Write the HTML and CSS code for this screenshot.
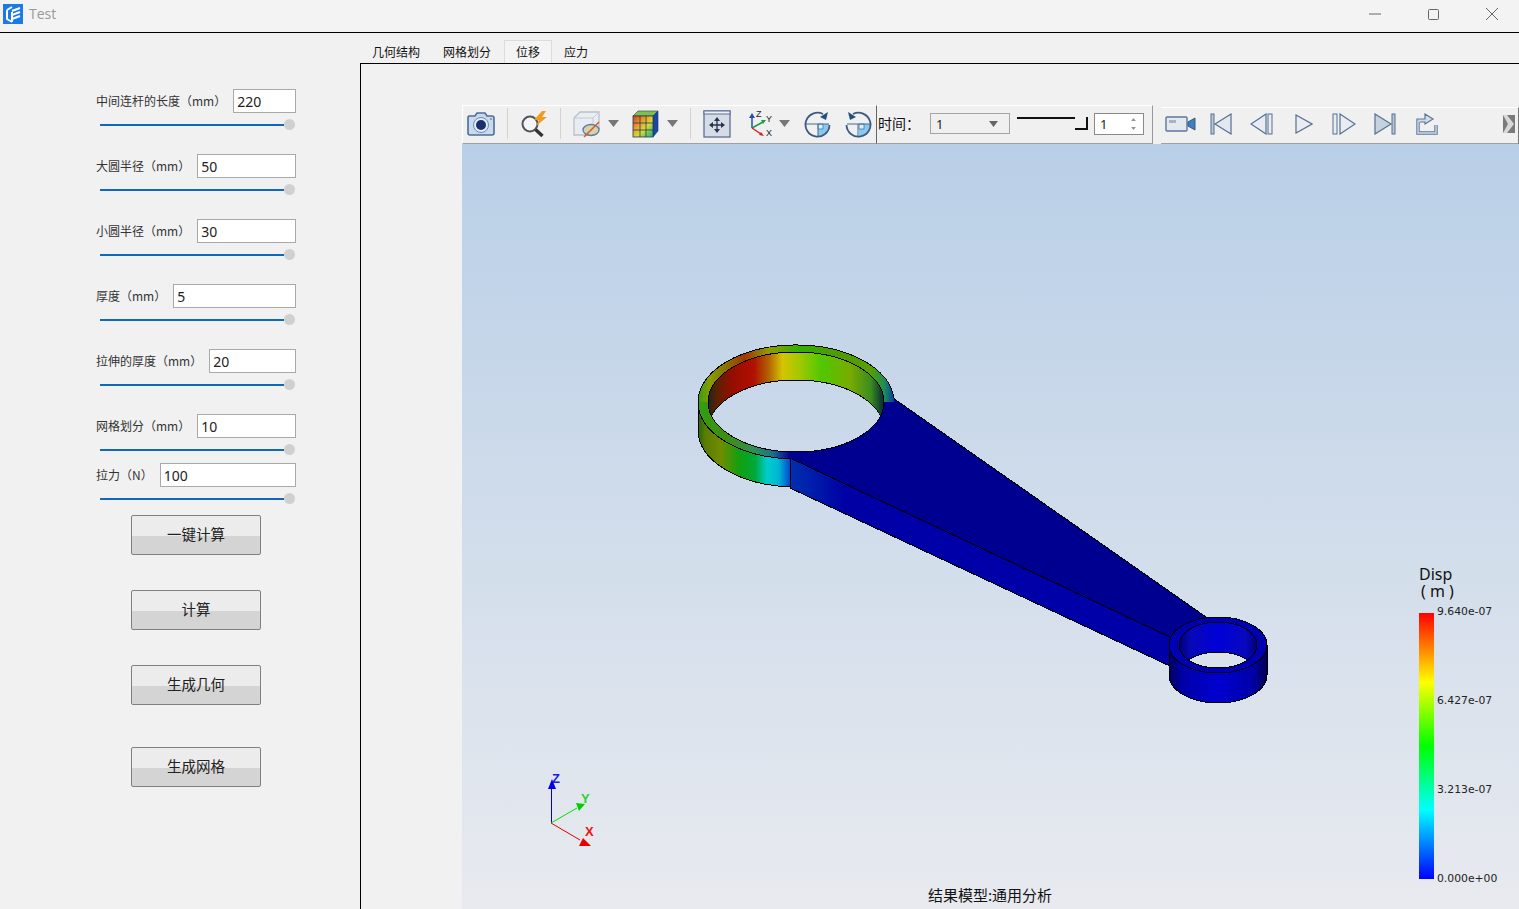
FILE: index.html
```html
<!DOCTYPE html>
<html lang="zh-CN">
<head>
    <meta charset="UTF-8">
    <meta name="viewport" content="width=device-width, initial-scale=1.0">
    <title>Test</title>
    <link rel="stylesheet" href="styles.css">
</head>
<body>
    <div id="wrap">
        <!-- 标题栏 -->
        <div id="titlebar">
            <svg class="appicon" width="20" height="20" viewBox="0 0 20 20">
                <rect width="20" height="20" fill="#1a7be8"/>
                <path d="M4 6l5-3M4 6v9l5 3M9 8v10M9 7l8-3M9 11l8-3M9 15l8-3" fill="none" stroke="#fff" stroke-width="2"/>
            </svg>
            <span class="apptitle">Test</span>
            <div class="winbtns">
                <svg width="14" height="14" viewBox="0 0 14 14"><path d="M1 7h12" stroke="#666" fill="none"/></svg>
                <svg width="14" height="14" viewBox="0 0 14 14"><rect x="2.5" y="2.5" width="10" height="10" rx="1" stroke="#666" fill="none"/></svg>
                <svg width="14" height="14" viewBox="0 0 14 14"><path d="M1 1l12 12M13 1L1 13" stroke="#666" fill="none"/></svg>
            </div>
        </div>

        <div id="main">
            <!-- 左侧参数 -->
            <div id="params">
                <div class="field"><label>中间连杆的长度（mm）</label><input class="num" type="text" value="220"></div>
                <div class="slider"><i></i><b></b></div>
                <div class="field"><label>大圆半径（mm）</label><input class="num" type="text" value="50"></div>
                <div class="slider"><i></i><b></b></div>
                <div class="field"><label>小圆半径（mm）</label><input class="num" type="text" value="30"></div>
                <div class="slider"><i></i><b></b></div>
                <div class="field"><label>厚度（mm）</label><input class="num" type="text" value="5"></div>
                <div class="slider"><i></i><b></b></div>
                <div class="field"><label>拉伸的厚度（mm）</label><input class="num" type="text" value="20"></div>
                <div class="slider"><i></i><b></b></div>
                <div class="field"><label>网格划分（mm）</label><input class="num" type="text" value="10"></div>
                <div class="slider tight"><i></i><b></b></div>
                <div class="field"><label>拉力（N）</label><input class="num" type="text" value="100"></div>
                <div class="slider tight"><i></i><b></b></div>
                <button class="calc first">一键计算</button>
                <button class="calc">计算</button>
                <button class="calc">生成几何</button>
                <button class="calc last">生成网格</button>
            </div>

            <!-- 右侧 -->
            <div id="right">
                <div id="tabs">
                    <div class="tab">几何结构</div>
                    <div class="tab">网格划分</div>
                    <div class="tab on">位移</div>
                    <div class="tab">应力</div>
                </div>
                <div id="pane">
                    <div id="toolbar">
                        <div class="tb tb-left">
                            <svg class="m4" width="28" height="26" viewBox="0 0 28 26">
                                <path d="M2 5h6l2-3h8l2 3h5a2 2 0 0 1 2 2v15a2 2 0 0 1-2 2H3a2 2 0 0 1-2-2V7a2 2 0 0 1 1-2z" fill="#c9daf0" stroke="#4d6d96" stroke-width="1.6"/>
                                <circle cx="14" cy="14" r="7.5" fill="#e4ecf6" stroke="#6d8bb3"/>
                                <circle cx="14" cy="14" r="5" fill="#1b2f70"/>
                                <circle cx="24" cy="8" r="1" fill="#6d8bb3"/>
                            </svg>
                            <span class="sep m12"></span>
                            <svg class="m12" width="28" height="26" viewBox="0 0 28 26">
                                <circle cx="10" cy="13" r="7.5" fill="#f2f5fa" stroke="#555" stroke-width="2"/>
                                <path d="M15.5 18.5l7 6.5" stroke="#333" stroke-width="3.4" fill="none"/>
                                <path d="M22 0l-8 9h5l-3 6 11-9h-5l4-6z" fill="#f09a1e"/>
                            </svg>
                            <span class="sep m12"></span>
                            <svg class="m12" width="28" height="28" viewBox="0 0 28 28">
                                <path d="M1 8l6-6h19v17l-6 6H1z" fill="#e9edf3" stroke="#b8c0cc" stroke-width="1.3"/>
                                <path d="M1 8h19v17M20 8l6-6" fill="none" stroke="#c2cad6"/>
                                <ellipse cx="18" cy="20" rx="8" ry="5.5" fill="#d8d2a8" stroke="#5a7ba6" stroke-width="1.3"/>
                                <path d="M11 27L26 12" stroke="#d0582a" stroke-width="1.4"/>
                            </svg>
                            <svg class="m7" width="11" height="7" viewBox="0 0 11 7"><path d="M0 0h11L5.5 7z" fill="#777"/></svg>
                            <svg class="m13" width="27" height="28" viewBox="0 0 27 28">
                                <defs>
                                    <linearGradient id="cubefront" x1="0" y1="0" x2="1" y2="1">
                                        <stop offset="0" stop-color="#d83a20"/><stop offset=".35" stop-color="#e8a030"/><stop offset=".6" stop-color="#d8d840"/><stop offset=".85" stop-color="#50c060"/><stop offset="1" stop-color="#30a0d0"/>
                                    </linearGradient>
                                </defs>
                                <path d="M1 6l5-5h20l-5 5z" fill="#7cc24a" stroke="#2a3a4a" stroke-width=".6"/>
                                <path d="M21 6l5-5v20l-5 6z" fill="#1848a8" stroke="#12306a" stroke-width=".6"/>
                                <rect x="1" y="6" width="20" height="21" fill="url(#cubefront)" stroke="#2a3a4a" stroke-width=".8"/>
                                <path d="M8 6v21M14 6v21M1 13h20M1 20h20" stroke="#2a3a4a" stroke-width=".8"/>
                            </svg>
                            <svg class="m8" width="11" height="7" viewBox="0 0 11 7"><path d="M0 0h11L5.5 7z" fill="#777"/></svg>
                            <span class="sep m12"></span>
                            <svg class="m12" width="28" height="28" viewBox="0 0 28 28">
                                <rect x="1" y="1" width="26" height="26" fill="#d5dce6" stroke="#5b7194" stroke-width="1.3"/>
                                <rect x="1" y="1" width="26" height="3" fill="#eef1f6" stroke="#5b7194"/>
                                <path d="M14 10v10M9 15h10" stroke="#25344f" stroke-width="1.3"/>
                                <path d="M14 7l-3 4h6zM14 23l-3-4h6zM6 15l4-3v6zM22 15l-4-3v6z" fill="#25344f"/>
                            </svg>
                            <svg class="m16" width="26" height="28" viewBox="0 0 26 28">
                                <path d="M5 18V7" stroke="#1f4fb8" stroke-width="1.5"/>
                                <path d="M5 3l-3 5h6z" fill="#1f4fb8"/>
                                <path d="M5 18l11-6" stroke="#1e9a48" stroke-width="1.5"/>
                                <path d="M19 10l-5 0 2 4z" fill="#1e9a48"/>
                                <path d="M5 18l9 6" stroke="#d8202a" stroke-width="1.5"/>
                                <path d="M17 26l-5-1 2-3z" fill="#d8202a"/>
                                <text x="9" y="7" class="axislabel">Z</text>
                                <text x="19" y="12" class="axislabel">Y</text>
                                <text x="19" y="26" class="axislabel">X</text>
                            </svg>
                            <svg class="m6" width="11" height="7" viewBox="0 0 11 7"><path d="M0 0h11L5.5 7z" fill="#777"/></svg>
                            <svg class="m14" width="27" height="28" viewBox="0 0 27 28">
                                <path d="M14 14h11a12 12 0 0 1-11 12z" fill="#8cc8ee"/>
                                <path d="M14 14h5v5h-5z" fill="#d9eefa" stroke="#2c6ea8" stroke-width=".7"/>
                                <path d="M1 14h24M14 14v12" stroke="#3c6a96" fill="none"/>
                                <path d="M19 4A12 12 0 1 0 25.5 15" fill="none" stroke="#3c5a80" stroke-width="1.8"/>
                                <path d="M24 2l-2 8-6-3z" fill="#24507e"/>
                            </svg>
                            <svg class="m14" width="27" height="28" viewBox="0 0 27 28">
                                <path d="M13 14H2a12 12 0 0 0 11 12z" fill="#8cc8ee" transform="translate(27 0) scale(-1 1)"/>
                                <path d="M8 14h5v5H8z" fill="#d9eefa" stroke="#2c6ea8" stroke-width=".7" transform="translate(27 0) scale(-1 1)"/>
                                <path d="M26 14H2M13 14v12" stroke="#3c6a96" fill="none"/>
                                <path d="M8 4A12 12 0 1 1 1.5 15" fill="none" stroke="#3c5a80" stroke-width="1.8"/>
                                <path d="M3 2l2 8 6-3z" fill="#24507e"/>
                            </svg>
                        </div>

                        <div class="tb tb-time">
                            <span class="timelabel">时间：</span>
                            <div class="combo"><span>1</span><svg width="9" height="6" viewBox="0 0 9 6"><path d="M0 0h9L4.5 6z" fill="#666"/></svg></div>
                            <div class="timeslider"><i></i><b></b></div>
                            <div class="spin"><span>1</span><svg width="7" height="16" viewBox="0 0 7 16"><path d="M3.5 2L6 5H1zM3.5 14L1 11h5z" fill="#999"/></svg></div>
                        </div>

                        <div class="tb tb-play">
                            <svg class="m4" width="31" height="16" viewBox="0 0 31 16">
                                <rect x="1" y="1" width="21" height="14" rx="1" fill="#e4e9f0" stroke="#5c7698" stroke-width="1.4"/>
                                <rect x="4" y="4" width="7" height="3" fill="#a6b3c4"/>
                                <path d="M23 6l7-4v12l-7-4z" fill="#3d80c0" stroke="#345a86"/>
                            </svg>
                            <svg class="m14" width="22" height="22" viewBox="0 0 22 22">
                                <rect x="1" y="1" width="3" height="20" fill="#b9c6d6" stroke="#55708f"/>
                                <path d="M21 1v20L5 11z" fill="#e3e8ef" stroke="#55708f" stroke-width="1.2"/>
                            </svg>
                            <svg class="m18" width="24" height="22" viewBox="0 0 24 22">
                                <path d="M16 1v20L1 11z" fill="#e9edf3" stroke="#55708f" stroke-width="1.2"/>
                                <rect x="18" y="1" width="4" height="20" fill="#e9edf3" stroke="#55708f"/>
                            </svg>
                            <svg class="m21" width="18" height="20" viewBox="0 0 18 20">
                                <path d="M1 1v18l16-9z" fill="#e9edf3" stroke="#55708f" stroke-width="1.2"/>
                            </svg>
                            <svg class="m19" width="24" height="22" viewBox="0 0 24 22">
                                <rect x="1" y="1" width="4" height="20" fill="#e9edf3" stroke="#55708f"/>
                                <path d="M8 1v20l15-10z" fill="#e9edf3" stroke="#55708f" stroke-width="1.2"/>
                            </svg>
                            <svg class="m18" width="22" height="22" viewBox="0 0 22 22">
                                <path d="M1 1v20l16-10z" fill="#c7d2df" stroke="#55708f" stroke-width="1.2"/>
                                <rect x="18" y="1" width="3" height="20" fill="#b9c6d6" stroke="#55708f"/>
                            </svg>
                            <svg class="m19" width="23" height="22" viewBox="0 0 23 22">
                                <path d="M3 8v12h18v-8" fill="none" stroke="#5c7698" stroke-width="3.4"/>
                                <path d="M3 8v12h18v-8" fill="none" stroke="#cfdcec" stroke-width="1.4"/>
                                <path d="M2 8V6h8V1l8 5-8 5V9H5" fill="#cfdcec" stroke="#5c7698" stroke-width="1.2"/>
                            </svg>
                            <svg class="grip" width="12" height="18" viewBox="0 0 12 18">
                                <rect width="12" height="18" fill="#7a7a7a"/>
                                <path d="M0 0h4l7 9-7 9H0l5-9z" fill="#d8d8d8"/>
                            </svg>
                        </div>
                    </div>

                    <!-- 结果视图: 坐标与页面一致 -->
                    <svg id="viewer" width="1057" height="765" viewBox="462 144 1057 765">
                        <defs>
                            <linearGradient id="bg" gradientUnits="userSpaceOnUse" x1="0" y1="144" x2="0" y2="909">
                                <stop offset="0" stop-color="#b9cfe7"/>
                                <stop offset="1" stop-color="#e8eaef"/>
                            </linearGradient>
                            <linearGradient id="wall" gradientUnits="userSpaceOnUse" x1="698" y1="0" x2="790" y2="0">
                                <stop offset="0" stop-color="#1f6a10"/><stop offset=".08" stop-color="#5a7c00"/><stop offset=".25" stop-color="#708c00"/>
                                <stop offset=".45" stop-color="#10a010"/><stop offset=".62" stop-color="#00a838"/><stop offset=".75" stop-color="#00cccc"/>
                                <stop offset=".88" stop-color="#00b4d4"/><stop offset="1" stop-color="#0048d0"/>
                            </linearGradient>
                            <linearGradient id="armside" gradientUnits="userSpaceOnUse" x1="790" y1="0" x2="900" y2="0">
                                <stop offset="0" stop-color="#0030b0"/><stop offset=".5" stop-color="#0000a4"/><stop offset="1" stop-color="#0000a8"/>
                            </linearGradient>
                            <linearGradient id="rimtop" gradientUnits="userSpaceOnUse" x1="698" y1="0" x2="894" y2="0">
                                <stop offset="0" stop-color="#30a010"/><stop offset=".06" stop-color="#8a9c00"/><stop offset=".14" stop-color="#8a7200"/>
                                <stop offset=".24" stop-color="#a03600"/><stop offset=".36" stop-color="#909c00"/><stop offset=".52" stop-color="#30b000"/>
                                <stop offset=".72" stop-color="#4c9c00"/><stop offset=".88" stop-color="#58a000"/><stop offset=".95" stop-color="#208c58"/><stop offset="1" stop-color="#0040a0"/>
                            </linearGradient>
                            <linearGradient id="rimbot" gradientUnits="userSpaceOnUse" x1="698" y1="0" x2="894" y2="0">
                                <stop offset="0" stop-color="#30a010"/><stop offset=".14" stop-color="#408e10"/><stop offset=".28" stop-color="#309050"/>
                                <stop offset=".38" stop-color="#207090"/><stop offset=".47" stop-color="#000090"/><stop offset="1" stop-color="#000090"/>
                            </linearGradient>
                            <linearGradient id="innerwall" gradientUnits="userSpaceOnUse" x1="708" y1="0" x2="885" y2="0">
                                <stop offset="0" stop-color="#222"/><stop offset=".05" stop-color="#5a2200"/><stop offset=".14" stop-color="#980c00"/>
                                <stop offset=".26" stop-color="#b01000"/><stop offset=".34" stop-color="#b06000"/><stop offset=".42" stop-color="#d4c400"/>
                                <stop offset=".52" stop-color="#a0c800"/><stop offset=".64" stop-color="#50c800"/><stop offset=".8" stop-color="#78ac00"/>
                                <stop offset=".92" stop-color="#3c8c20"/><stop offset=".98" stop-color="#0c3c30"/><stop offset="1" stop-color="#222"/>
                            </linearGradient>
                            <linearGradient id="smallwall" gradientUnits="userSpaceOnUse" x1="1169" y1="0" x2="1267" y2="0">
                                <stop offset="0" stop-color="#00005c"/><stop offset=".14" stop-color="#0000a8"/><stop offset=".5" stop-color="#0000d0"/>
                                <stop offset=".86" stop-color="#0000a8"/><stop offset="1" stop-color="#00004c"/>
                            </linearGradient>
                            <linearGradient id="smallinner" gradientUnits="userSpaceOnUse" x1="1179" y1="0" x2="1257" y2="0">
                                <stop offset="0" stop-color="#000070"/><stop offset=".15" stop-color="#0808b8"/><stop offset=".5" stop-color="#0000d8"/>
                                <stop offset=".85" stop-color="#0808c0"/><stop offset="1" stop-color="#000070"/>
                            </linearGradient>
                            <linearGradient id="scale" x1="0" y1="0" x2="0" y2="1">
                                <stop offset="0" stop-color="#f00"/><stop offset=".26" stop-color="#ff0"/>
                                <stop offset=".5" stop-color="#0f0"/><stop offset=".74" stop-color="#0ff"/><stop offset="1" stop-color="#00f"/>
                            </linearGradient>
                            <clipPath id="bighole"><ellipse cx="796" cy="402" rx="88" ry="50"/></clipPath>
                            <clipPath id="smallhole"><ellipse cx="1218" cy="645" rx="39" ry="23"/></clipPath>
                        </defs>
                        <rect x="462" y="144" width="1057" height="765" fill="url(#bg)"/>

                        <g class="model">
                            <!-- 大圆外壁 -->
                            <path d="M698 402V430A98 57 0 0 0 790 486.9V458.9A98 57 0 0 1 698 402Z" fill="url(#wall)" stroke="#000"/>
                            <!-- 连杆 -->
                            <path d="M790 458V488L1172 667V638Z" fill="url(#armside)" stroke="#000"/>
                            <path d="M893 398L1206 617L1172 638L790 458Z" fill="#000090"/>
                            <path d="M893 398L1206 617M790 458L1172 638" fill="none" stroke="#000"/>
                            <!-- 大圆上表面 -->
                            <path d="M698 402A98 57 0 0 1 894 402Z" fill="url(#rimtop)"/>
                            <path d="M698 402A98 57 0 0 0 894 402Z" fill="url(#rimbot)"/>
                            <path d="M790 458.9A98 57 0 0 1 698 402A98 57 0 0 1 893.76 398" fill="none" stroke="#000"/>
                            <ellipse cx="796" cy="402" rx="88" ry="50" fill="url(#innerwall)"/>
                            <g clip-path="url(#bighole)">
                                <ellipse cx="796" cy="430" rx="88" ry="50" fill="url(#bg)" stroke="#000"/>
                            </g>
                            <ellipse cx="796" cy="402" rx="88" ry="50" fill="none" stroke="#000"/>
                            <!-- 小圆 -->
                            <path d="M1169 645V675A49 28 0 0 0 1267 675V645Z" fill="url(#smallwall)" stroke="#000"/>
                            <ellipse cx="1218" cy="645" rx="49" ry="28" fill="#0000b0" stroke="#000"/>
                            <ellipse cx="1218" cy="645" rx="39" ry="23" fill="url(#smallinner)"/>
                            <g clip-path="url(#smallhole)">
                                <ellipse cx="1218" cy="675" rx="39" ry="23" fill="url(#bg)" stroke="#000"/>
                            </g>
                            <ellipse cx="1218" cy="645" rx="39" ry="23" fill="none" stroke="#000"/>
                        </g>

                        <!-- 坐标轴 -->
                        <g>
                            <path d="M551.5 823V786" stroke="#0000e0"/>
                            <path d="M552 779l-4 10h8z" fill="#0000e0"/>
                            <path d="M551 823l26-15" stroke="#00e000"/>
                            <path d="M585 804l-9-1 3 8z" fill="#00d000"/>
                            <path d="M551 823l29 17" stroke="#e00000"/>
                            <path d="M591 846l-12 0 4-8z" fill="#e80000"/>
                            <text x="552" y="783" class="triad tz">Z</text>
                            <text x="581" y="803" class="triad ty">Y</text>
                            <text x="585" y="836" class="triad tx">X</text>
                        </g>

                        <!-- 色标 -->
                        <text class="legendtitle"><tspan x="1419" y="580">Disp</tspan><tspan x="1421" y="597">( m )</tspan></text>
                        <rect x="1419" y="613" width="15" height="266" fill="url(#scale)"/>
                        <text x="1437" y="615" class="legendval">9.640e-07</text>
                        <text x="1437" y="704" class="legendval">6.427e-07</text>
                        <text x="1437" y="793" class="legendval">3.213e-07</text>
                        <text x="1437" y="882" class="legendval">0.000e+00</text>

                        <text x="990" y="901" class="modelname">结果模型:通用分析</text>
                    </svg>
                </div>
            </div>
        </div>
    </div>
</body>
</html>
```

FILE: styles.css
```css
*{
    margin: 0;
    padding: 0;
    box-sizing: border-box;
}
html,body{
    width: 100%;
    height: 100vh;
    overflow: hidden;
}
body{
    background-color: #f1f1f1;
    font-family: "Noto Sans", "Noto Sans CJK SC", sans-serif;
    color: #222;
}
#wrap{
    width: 100%;
    height: 100vh;
    display: flex;
    flex-direction: column;
}

/* 标题栏 */
#titlebar{
    height: 33px;
    flex: none;
    display: flex;
    align-items: center;
    padding: 0 20px 5px 3px;
    background-color: #f3f3f3;
    border-bottom: 1px solid #000;
}
.apptitle{
    margin-left: 6px;
    font-family: "Open Sans", sans-serif;
    font-size: 14px;
    color: #999;
}
.winbtns{
    margin-left: auto;
    display: flex;
    gap: 44px;
}
.winbtns svg:last-child{
    margin-left: 1px;
}

#main{
    flex: 1;
    display: flex;
    min-height: 0;
}

/* 左侧参数 */
#params{
    width: 360px;
    flex: none;
    padding: 56px 64px 0 96px;
    display: flex;
    flex-direction: column;
}
.field{
    height: 24px;
    flex: none;
    display: flex;
    align-items: center;
    gap: 7px;
}
.field label{
    flex: none;
    margin-bottom: 1px;
    font-family: "Noto Sans CJK SC", sans-serif;
    font-size: 12px;
    color: #333;
}
.num{
    flex: 1;
    min-width: 0;
    height: 24px;
    padding: 0 3px;
    border: 1px solid #a9a9a9;
    background-color: #fff;
    font-family: "Noto Sans", sans-serif;
    font-size: 14px;
    color: #222;
}
.slider{
    height: 11px;
    flex: none;
    margin: 6px 1px 24px 4px;
    display: flex;
    align-items: center;
}
.slider.tight{
    margin-bottom: 8px;
}
.slider i{
    flex: 1;
    height: 2px;
    background-color: #0f69b8;
}
.slider b{
    width: 11px;
    height: 11px;
    border-radius: 50%;
    background-color: #d0d0d0;
}
.calc{
    width: 130px;
    height: 40px;
    flex: none;
    margin: 0 0 35px 35px;
    padding-bottom: 3px;
    border: 1px solid #808080;
    border-radius: 2px;
    background: linear-gradient(#ececec 52%, #d4d4d4 52%);
    font-family: "Noto Sans CJK SC", sans-serif;
    font-size: 14.5px;
    color: #222;
}
.calc.first{
    margin-top: 3px;
}
.calc:nth-last-of-type(2){
    margin-bottom: 42px;
}

/* 标签页 */
#right{
    flex: 1;
    min-width: 0;
    display: flex;
    flex-direction: column;
}
#tabs{
    height: 30px;
    flex: none;
    display: flex;
    align-items: flex-end;
}
.tab{
    height: 23px;
    line-height: 23px;
    padding: 0 12px;
    font-family: "Noto Sans CJK SC", sans-serif;
    font-size: 12px;
    color: #111;
}
.tab:nth-child(2){
    margin-left: -1px;
}
.tab.on{
    margin-left: 1px;
    border: 1px solid #dcdcdc;
    border-bottom: 0;
    background-color: #f4f4f4;
    padding: 0 11px;
    line-height: 21px;
}
#pane{
    flex: 1;
    min-height: 0;
    padding: 41px 0 0 101px;
    border-top: 1px solid #000;
    border-left: 1px solid #000;
}

/* 工具栏 */
#toolbar{
    height: 39px;
    display: flex;
    background-color: #f0f0f0;
}
.tb{
    display: flex;
    align-items: center;
    padding-bottom: 2px;
    border-bottom: 1px solid #a0a0a0;
}
.tb-left{
    width: 414px;
    flex: none;
    border-top: 1px solid #fff;
    border-left: 1px solid #fff;
}
.tb-time{
    width: 277px;
    flex: none;
    padding-left: 1px;
    border-top: 1px solid #fff;
    border-left: 1px solid #666;
    border-right: 1px solid #999;
}
.tb-play{
    flex: 1;
    margin-left: 8px;
    margin-top: 2px;
    padding-bottom: 4px;
    border-top: 1px solid #fff;
    border-right: 1px solid #777;
}
.sep{
    width: 1px;
    height: 31px;
    background-color: #d2d2d2;
}
.m4{ margin-left: 4px; }
.m6{ margin-left: 6px; }
.m7{ margin-left: 7px; }
.m8{ margin-left: 8px; }
.m12{ margin-left: 12px; }
.m13{ margin-left: 13px; }
.m14{ margin-left: 14px; }
.m16{ margin-left: 16px; }
.m18{ margin-left: 18px; }
.m19{ margin-left: 19px; }
.m21{ margin-left: 21px; }
.grip{
    margin-left: auto;
    margin-right: 3px;
}
.axislabel{
    font-family: "Liberation Sans", sans-serif;
    font-size: 9px;
    fill: #222;
}
.timelabel{
    width: 52px;
    flex: none;
    margin-bottom: 2px;
    font-family: "Noto Sans CJK SC", sans-serif;
    font-size: 14px;
    color: #111;
}
.combo{
    width: 80px;
    height: 21px;
    padding: 0 11px 0 5px;
    display: flex;
    align-items: center;
    justify-content: space-between;
    border: 1px solid #a5a5a5;
    font-size: 13px;
}
.timeslider{
    width: 71px;
    height: 14px;
    margin-left: 7px;
    display: flex;
    align-items: flex-start;
}
.timeslider i{
    flex: 1;
    height: 2px;
    background-color: #111;
}
.timeslider b{
    width: 13px;
    height: 13px;
    border-right: 2px solid #111;
    border-bottom: 2px solid #111;
    background-color: #f0f0f0;
}
.spin{
    width: 50px;
    height: 22px;
    margin-left: 6px;
    padding: 0 6px 0 5px;
    display: flex;
    align-items: center;
    justify-content: space-between;
    border: 1px solid #8a8a8a;
    background-color: #fff;
    font-size: 13px;
}

/* 结果视图 */
#viewer{
    display: block;
}
.model{
    shape-rendering: crispEdges;
}
.triad{
    font-family: "Liberation Sans", sans-serif;
    font-size: 13px;
    font-weight: bold;
}
.tz{ fill: #1a1ae0; }
.ty{ fill: #30d030; }
.tx{ fill: #f01010; }
.legendtitle{
    font-family: "Noto Sans", sans-serif;
    font-size: 16px;
    fill: #111;
}
.legendval{
    font-family: "DejaVu Sans", sans-serif;
    font-size: 10.8px;
    fill: #222;
}
.modelname{
    font-family: "Noto Sans CJK SC", sans-serif;
    font-size: 15px;
    text-anchor: middle;
    fill: #111;
}
```
